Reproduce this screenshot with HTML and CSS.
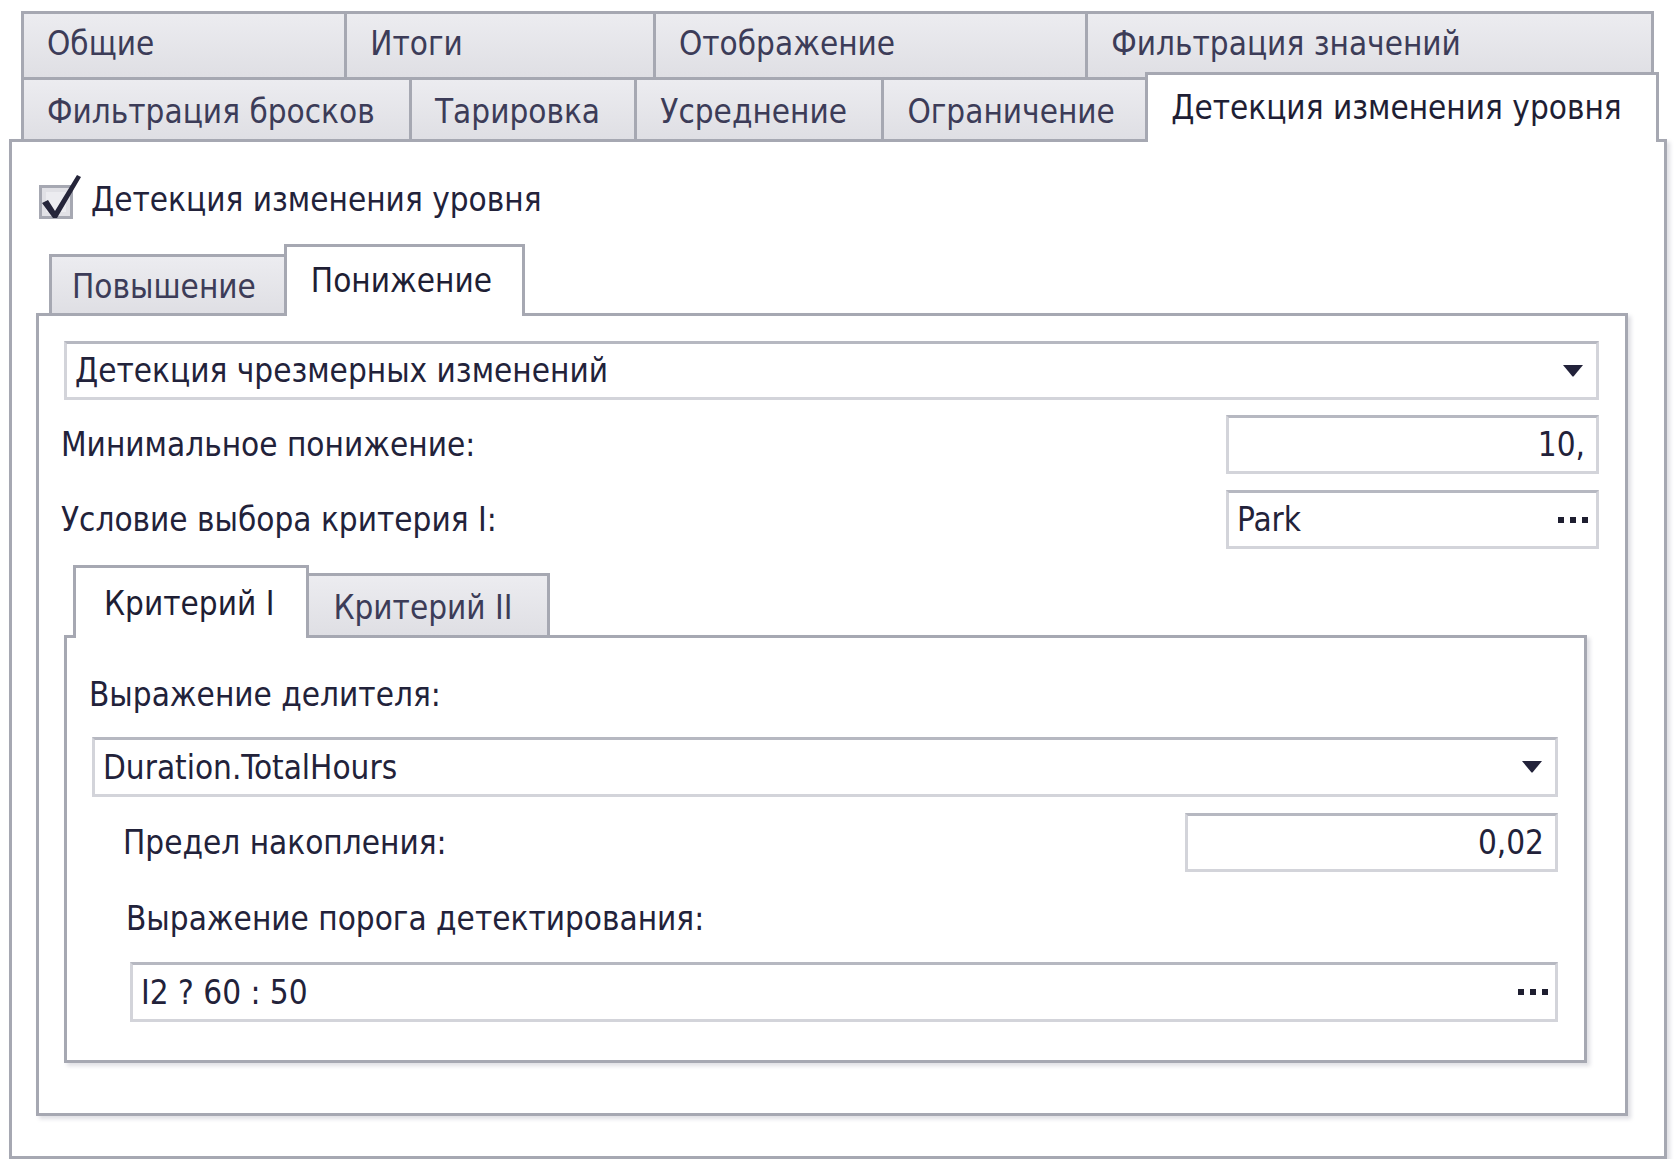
FILE: index.html
```html
<!DOCTYPE html>
<html lang="ru">
<head>
<meta charset="utf-8">
<title>Детекция изменения уровня</title>
<link rel="stylesheet" href="styles.css">
</head>
<body>
<div class="tabctl">
  <div class="strip">
    <div class="tabrow row1">
      <div class="tab">Общие</div>
      <div class="tab">Итоги</div>
      <div class="tab">Отображение</div>
      <div class="tab">Фильтрация значений</div>
    </div>
    <div class="tabrow row2">
      <div class="tab">Фильтрация бросков</div>
      <div class="tab">Тарировка</div>
      <div class="tab">Усреднение</div>
      <div class="tab">Ограничение</div>
      <div class="tab active">Детекция изменения уровня</div>
    </div>
  </div>
  <div class="panel main-page">
    <div class="check-row">
      <svg class="checkbox" width="44" height="46" viewBox="0 0 44 46">
        <rect x="1.5" y="12.5" width="31" height="31" fill="#e1e1e6" stroke="#a6a8b2" stroke-width="3"/>
        <rect x="7" y="18" width="20" height="20" fill="#ececf0"/>
        <path d="M3 29 L9 26 L16 37 L38 1 L42 3 L18 44 L14 44 Z" fill="#25253a"/>
      </svg>
      <span class="check-label">Детекция изменения уровня</span>
    </div>
    <div class="subtabs level-tabs">
      <div class="stab">Повышение</div>
      <div class="stab active">Понижение</div>
    </div>
    <div class="panel inner-page">
      <div class="field combo">
        <span class="value">Детекция чрезмерных изменений</span>
        <svg class="arrow" width="20" height="12" viewBox="0 0 20 12"><path d="M0 0 H20 L10.5 11.5 H9.5 Z" fill="#22223a"/></svg>
      </div>
      <div class="form-row">
        <span class="label">Минимальное понижение:</span>
        <div class="field num">10,</div>
      </div>
      <div class="form-row second">
        <span class="label">Условие выбора критерия I:</span>
        <div class="field num btn-edit">
          <span class="value">Park</span>
          <svg class="dots" width="30" height="6" viewBox="0 0 30 6"><rect x="0" y="0" width="6" height="6" fill="#1e1e30"/><rect x="12" y="0" width="6" height="6" fill="#1e1e30"/><rect x="24" y="0" width="6" height="6" fill="#1e1e30"/></svg>
        </div>
      </div>
      <div class="subtabs crit-tabs">
        <div class="stab active">Критерий I</div>
        <div class="stab">Критерий II</div>
      </div>
      <div class="panel crit-page">
        <div class="label block first">Выражение делителя:</div>
        <div class="field combo combo2">
          <span class="value">Duration.TotalHours</span>
          <svg class="arrow" width="20" height="12" viewBox="0 0 20 12"><path d="M0 0 H20 L10.5 11.5 H9.5 Z" fill="#22223a"/></svg>
        </div>
        <div class="form-row indent">
          <span class="label">Предел накопления:</span>
          <div class="field num">0,02</div>
        </div>
        <div class="label block indent second-label">Выражение порога детектирования:</div>
        <div class="field btn-edit expr">
          <span class="value">I2 ? 60 : 50</span>
          <svg class="dots" width="30" height="6" viewBox="0 0 30 6"><rect x="0" y="0" width="6" height="6" fill="#1e1e30"/><rect x="12" y="0" width="6" height="6" fill="#1e1e30"/><rect x="24" y="0" width="6" height="6" fill="#1e1e30"/></svg>
        </div>
      </div>
    </div>
  </div>
</div>
</body>
</html>
```

FILE: styles.css
```css
* { box-sizing: border-box; }

body {
  margin: 0;
  background: #ffffff;
  font-family: "DejaVu Sans Condensed", "DejaVu Sans", sans-serif;
  font-stretch: condensed;
  font-size: 33px;
  color: #24243c;
}

.tabctl {
  width: 1658px;
  margin: 11px 0 0 9px;
}

.strip {
  padding: 0 8px 0 12px;
}

.tabrow {
  display: flex;
}

.row1 {
  height: 66px;
  margin-right: 5px;
}

.row2 {
  height: 62px;
  align-items: flex-end;
}

.tab {
  flex: 1 1 auto;
  display: flex;
  align-items: center;
  padding: 0 25px 0 23px;
  white-space: nowrap;
  color: #3c3c58;
  background: linear-gradient(#ececf0, #dfdfe4);
  border: 3px solid #a6a8b2;
  border-bottom: 0;
}

.tab + .tab {
  margin-left: -3px;
}

.row1 .tab {
  height: 66px;
  padding-bottom: 5px;
}

.row2 .tab {
  height: 62px;
  padding-top: 3px;
}

.row2 .tab.active {
  height: 70px;
  margin-bottom: -3px;
  margin-left: -7px;
  padding-top: 0;
  padding-bottom: 2px;
  background: #ffffff;
  color: #1e1e34;
  position: relative;
  z-index: 1;
}

.panel {
  background: #ffffff;
  border: 3px solid #a6a8b2;
  box-shadow: 3px 3px 4px rgba(110, 110, 130, 0.22);
}

.main-page {
  height: 1020px;
  padding: 0 36px 0 24px;
}

.check-row {
  display: flex;
  align-items: center;
  height: 40px;
  margin-top: 37px;
}

.checkbox {
  margin-left: 3px;
  margin-top: -4px;
  flex: none;
}

.check-label {
  margin-left: 8px;
  color: #22223a;
}

.subtabs {
  display: flex;
  align-items: flex-end;
}

.stab {
  display: flex;
  align-items: center;
  height: 59px;
  padding: 2px 28px 0 20px;
  white-space: nowrap;
  color: #3c3c58;
  background: linear-gradient(#ececf0, #dfdfe4);
  border: 3px solid #a6a8b2;
  border-bottom: 0;
}

.stab + .stab {
  margin-left: -3px;
}

.stab.active {
  height: 72px;
  margin-bottom: -3px;
  padding: 0 30px 3px 24px;
  background: #ffffff;
  color: #1e1e34;
  position: relative;
  z-index: 1;
}

.level-tabs {
  height: 69px;
  margin-top: 25px;
  padding-left: 13px;
}

.inner-page {
  height: 803px;
  padding: 25px 26px 0 25px;
}

.field {
  display: flex;
  align-items: center;
  height: 59px;
  padding: 0 13px 0 8px;
  background: #ffffff;
  border: 3px solid #d3d4da;
  border-top-color: #b6b8c1;
  color: #22223a;
  white-space: nowrap;
}

.combo {
  justify-content: space-between;
}

.form-row {
  display: flex;
  align-items: center;
  justify-content: space-between;
  height: 59px;
  margin-top: 15px;
}

.form-row.second {
  margin-top: 16px;
}

.label {
  margin-left: -3px;
  color: #22223a;
  white-space: nowrap;
}

.num {
  width: 373px;
  justify-content: flex-end;
  padding-right: 11px;
}

.btn-edit {
  justify-content: space-between;
  padding-right: 8px;
}

.crit-tabs {
  height: 70px;
  margin-top: 16px;
  padding-left: 9px;
}

.crit-tabs .stab {
  height: 62px;
  padding: 3px 34px 0 24px;
}

.crit-tabs .stab.active {
  height: 73px;
  padding: 0 32px 0 28px;
}

.crit-page {
  height: 428px;
  margin-right: 12px;
  padding: 0 26px 0 25px;
}

.label.block {
  display: flex;
  align-items: center;
  height: 40px;
}

.label.first {
  margin-top: 36px;
}

.combo2 {
  height: 60px;
  margin-top: 23px;
}

.form-row.indent {
  margin-top: 16px;
  padding-left: 34px;
}

.label.second-label {
  margin-top: 26px;
  margin-left: 34px;
}

.expr {
  height: 60px;
  margin-top: 24px;
  margin-left: 38px;
  padding-right: 7px;
}
```
